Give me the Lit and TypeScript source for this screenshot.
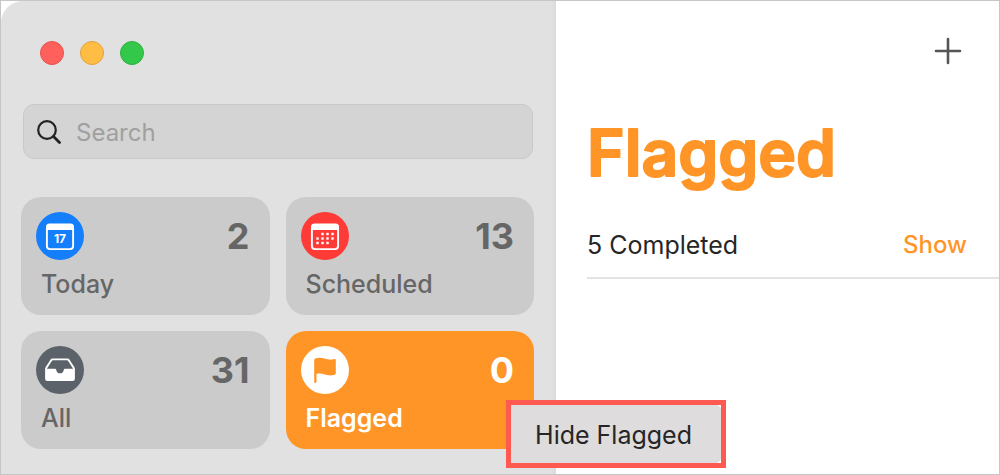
import { LitElement, html, css, svg } from "lit";
import { customElement, property } from "lit/decorators.js";

const icons: Record<string, unknown> = {
  today: svg`
    <circle cx="24" cy="24" r="24" fill="#147efb"/>
    <rect x="10.9" y="12.9" width="26.2" height="24.2" rx="3" fill="none" stroke="#fff" stroke-width="1.9"/>
    <path d="M10 17v-2a3.5 3.5 0 0 1 3.500-3.500h21a3.500 3.500 0 0 1 3.500 3.500v3h-28z" fill="#fff"/>
    <text x="24" y="31" text-anchor="middle" font-size="12" font-weight="700" fill="#fff">17</text>`,
  scheduled: svg`
    <circle cx="24" cy="24" r="24" fill="#ff3b37"/>
    <rect x="10.900" y="12.900" width="26.200" height="24.200" rx="3" fill="none" stroke="#fff" stroke-width="1.900"/>
    <path d="M10 17v-2a3.500 3.500 0 0 1 3.500-3.500h21a3.500 3.500 0 0 1 3.500 3.500v3h-28z" fill="#fff"/>
    ${[[21.500, 22], [26.500, 22], [31.500, 22], [16.500, 26.500], [21.500, 26.500], [26.500, 26.500], [31.500, 26.500], [16.500, 31], [21.500, 31], [26.500, 31]]
      .map(([x, y]) => svg`<rect x=${x - 1.2} y=${y - 1.2} width="2.400" height="2.400" rx="0.500" fill="#fff"/>`)}`,
  all: svg`
    <circle cx="24" cy="24" r="24" fill="#5b626a"/>
    <path d="M16.500 12.400h15q1.200 0 1.900 1l4.900 7.600q.6 1 .6 2.200v9.600q0 2.300-2.300 2.300h-25.200q-2.300 0-2.300-2.300v-9.600q0-1.200.6-2.200l4.900-7.600q.7-1 1.900-1z" fill="#fff"/>
    <path d="M17 14.300h14q.8 0 1.200.7l4.900 7.800h-8.100q-1.100 0-1.300 1.100-.5 3.400-3.700 3.400t-3.700-3.400q-.2-1.100-1.300-1.100h-8.100l4.900-7.800q.4-.7 1.200-.7z" fill="#5b626a"/>`,
  flagged: svg`
    <circle cx="24" cy="24" r="24" fill="#fff"/>
    <path d="M13.200 14q0-1 1-1.400 2-.8 4.300-.8c4.500 0 7 1.900 11 1.900 1.500 0 2.500-.2 3.800-.6q1.500-.4 1.500 1v13.300q0 .9-.9 1.200c-1.600.6-2.800.8-4.700.8-4.200 0-6.600-1.900-10.700-1.900-1.200 0-2.200.1-3 .4v8q0 1.100-1.100 1.100t-1.200-1.100z" fill="#ff9527"/>`,
};

@customElement("list-tile")
class ListTile extends LitElement {
  @property() icon = "";
  @property() label = "";
  @property({ type: Number }) count = 0;
  @property({ type: Boolean }) selected = false;

  static styles = css`
    :host { display: block; }
    .tile {
      display: grid;
      grid-template-columns: 48px 1fr;
      row-gap: 9px;
      width: 100%;
      box-sizing: border-box;
      margin: 0;
      padding: 15px 20px 15px 15px;
      border: 0;
      border-radius: 20px;
      background: #cbcbcb;
      color: #666;
      font-family: Inter, "Liberation Sans", sans-serif;
      text-align: left;
    }
    .selected { background: #ff9527; color: #fff; }
    .icon { display: block; width: 48px; height: 48px; }
    .count { font-size: 36px; line-height: 48px; font-weight: 700; text-align: right; }
    .label { grid-column: 1 / 3; padding-left: 5px; font-size: 25px; line-height: 31px; font-weight: 500; }
    .selected .label { font-weight: 600; }
  `;

  render() {
    return html`
      <button class="tile ${this.selected ? "selected" : ""}" type="button">
        <svg class="icon" viewBox="0 0 48 48" aria-hidden="true">${icons[this.icon]}</svg>
        <span class="count">${this.count}</span>
        <span class="label">${this.label}</span>
      </button>`;
  }
}

@customElement("app-root")
class AppRoot extends LitElement {
  static styles = css`
    :host {
      display: block;
      font-family: Inter, "Liberation Sans", sans-serif;
      color: #262626;
    }
    .window {
      display: grid;
      grid-template-columns: 555fr 443fr;
      min-height: 100vh;
      box-sizing: border-box;
      border: 1px solid #c6c6c6;
      background: #fff;
    }
    .sidebar {
      position: relative;
      box-sizing: border-box;
      padding: 40px 22px 25px 20px;
      border-radius: 22px 0 0 0;
      background: linear-gradient(to right, transparent calc(100% - 5px), #dadada), #e1e1e1;
    }
    .lights { display: flex; gap: 16px; padding-left: 19px; }
    .light {
      width: 24px;
      height: 24px;
      box-sizing: border-box;
      padding: 0;
      border: 1px solid;
      border-radius: 50%;
    }
    .close { background: #ff605c; border-color: #e9504c; }
    .minimize { background: #ffbd44; border-color: #e0a33a; }
    .zoom { background: #34c84a; border-color: #2bb03f; }
    .search {
      display: flex;
      align-items: center;
      gap: 15px;
      box-sizing: border-box;
      margin: 39px 1px 38px 2px;
      padding: 12px 14px 9px 13px;
      border: 1px solid #c9c9c9;
      border-radius: 11px;
      background: #d4d4d4;
    }
    .glass { flex: none; width: 24px; height: 26px; }
    .query {
      flex: 1;
      min-width: 0;
      height: 32px;
      padding: 0;
      border: 0;
      outline: 0;
      background: none;
      font: 400 24px/32px Inter, "Liberation Sans", sans-serif;
      color: #262626;
    }
    .query::placeholder { color: #a0a0a0; opacity: 1; }
    .tiles { display: grid; grid-template-columns: 1fr 1fr; gap: 16px; }
    .menu {
      position: absolute;
      right: -170px;
      bottom: 6px;
      z-index: 1;
      border: 5px solid #ff5a52;
      background: #fff;
    }
    .item {
      display: block;
      padding: 2px 29px 0 24px;
      border: 0;
      border-radius: 0 5px 5px 0;
      background: #dedcdd;
      color: #262626;
      font: 400 25px/56px Inter, "Liberation Sans", sans-serif;
      white-space: nowrap;
    }
    .content { padding: 36px 0 0 31px; }
    .toolbar { display: flex; justify-content: flex-end; padding-right: 37px; }
    .add { padding: 0; border: 0; background: none; }
    .plus { display: block; width: 28px; height: 28px; }
    .title { margin: 48px 0 0; }
    .lettering { display: block; width: 260px; height: 80px; overflow: visible; }
    .name {
      font-size: 64px;
      font-weight: 600;
      fill: #ff9527;
      stroke: #ff9527;
      stroke-width: 2px;
      stroke-linejoin: round;
    }
    .completed {
      display: flex;
      justify-content: space-between;
      align-items: center;
      margin-top: 34px;
      padding: 0 32px 14px 0;
      border-bottom: 2px solid #e4e4e4;
      font-size: 25px;
      line-height: 36px;
    }
    .show {
      padding: 0;
      border: 0;
      background: none;
      color: #ff9527;
      font: 500 24px/36px Inter, "Liberation Sans", sans-serif;
    }
  `;

  render() {
    return html`
      <div class="window">
        <aside class="sidebar">
          <div class="lights">
            <button class="light close" aria-label="Close"></button>
            <button class="light minimize" aria-label="Minimize"></button>
            <button class="light zoom" aria-label="Zoom"></button>
          </div>
          <label class="search">
            <svg class="glass" viewBox="0 0 24 26" fill="none" stroke="#222" stroke-linecap="round" aria-hidden="true">
              <circle cx="10" cy="10" r="8.800" stroke-width="2.200"/>
              <path d="M16.500 16.500l6 6" stroke-width="2.800"/>
            </svg>
            <input class="query" type="text" placeholder="Search" aria-label="Search">
          </label>
          <nav class="tiles">
            <list-tile icon="today" label="Today" .count=${2}></list-tile>
            <list-tile icon="scheduled" label="Scheduled" .count=${13}></list-tile>
            <list-tile icon="all" label="All" .count=${31}></list-tile>
            <list-tile icon="flagged" label="Flagged" .count=${0} selected></list-tile>
          </nav>
          <div class="menu"><button class="item" type="button">Hide Flagged</button></div>
        </aside>
        <main class="content">
          <div class="toolbar">
            <button class="add" aria-label="Add reminder">
              <svg class="plus" viewBox="0 0 28 28" stroke="#555" stroke-width="2.600" stroke-linecap="round" aria-hidden="true">
                <path d="M14 2v24M2 14h24"/>
              </svg>
            </button>
          </div>
          <h1 class="title">
            <svg class="lettering"><text class="name" x="0" y="63">Flagged</text></svg>
          </h1>
          <div class="completed">
            <span>5 Completed</span>
            <button class="show" type="button">Show</button>
          </div>
        </main>
      </div>`;
  }
}
